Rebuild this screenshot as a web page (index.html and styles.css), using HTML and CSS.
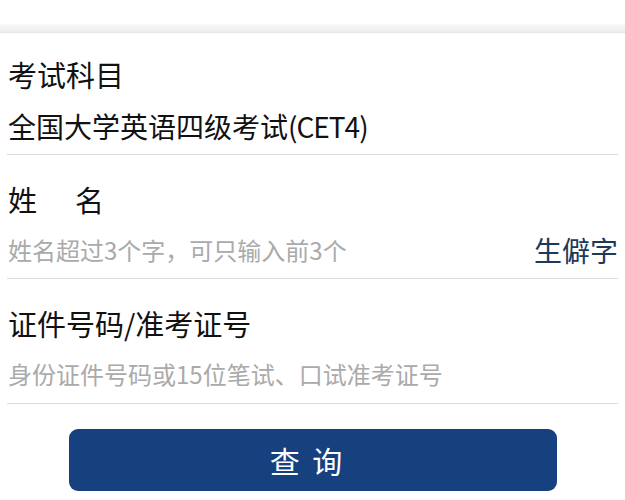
FILE: index.html
```html
<!DOCTYPE html>
<html lang="zh-CN">
<head>
<meta charset="utf-8">
<title>查询</title>
<link rel="stylesheet" href="styles.css">
</head>
<body>
<div class="topbar"></div>
<div class="shade"></div>
<form class="form">
  <div class="item first">
    <div class="label">考试科目</div>
    <div class="value">全国大学英语四级考试<span class="latin">(CET4)</span></div>
  </div>
  <div class="item">
    <div class="label">姓<span class="gap"></span>名</div>
    <div class="row">
      <span class="placeholder">姓名超过3个字，可只输入前3个</span>
      <span class="link">生僻字</span>
    </div>
  </div>
  <div class="item last">
    <div class="label">证件号码/准考证号</div>
    <div class="row">
      <span class="placeholder">身份证件号码或15位笔试、口试准考证号</span>
    </div>
  </div>
  <div class="actions">
    <button type="button" class="btn">查&nbsp;询</button>
  </div>
</form>
</body>
</html>
```
FILE: styles.css
```css
html, body {
  margin: 0;
  padding: 0;
  background: #fff;
}
body {
  font-family: "Noto Sans CJK SC", "Noto Sans", sans-serif;
  color: #111;
  width: 625px;
  height: 500px;
  overflow: hidden;
}
.topbar {
  height: 24px;
  background: #fff;
}
.shade {
  height: 9px;
  background: linear-gradient(#f8f8f8, #eeeeee 80%, #e4e4e4);
}
.form {
  margin: 0;
}
.item {
  margin: 0 7px;
  padding: 26px 0 10px 1px;
  border-bottom: 1px solid #dcdcdc;
}
.item.first {
  padding-top: 23px;
}
.item.last {
  padding-bottom: 11px;
}
.label {
  font-size: 29px;
  line-height: 36px;
  height: 36px;
}
.gap {
  display: inline-block;
  width: 38px;
}
.value {
  margin-top: 16px;
  font-size: 28px;
  line-height: 36px;
  height: 36px;
}
.latin {
  letter-spacing: -1px;
}
.row {
  margin-top: 15px;
  height: 36px;
  display: flex;
  align-items: center;
  justify-content: space-between;
}
.placeholder {
  font-size: 24px;
  color: #aaaaaa;
  line-height: 36px;
}
.link {
  font-size: 28px;
  color: #20385a;
  line-height: 36px;
}
.actions {
  display: flex;
  justify-content: center;
  padding-top: 25px;
}
.btn {
  width: 488px;
  height: 62px;
  border: none;
  border-radius: 9px;
  background: #17407f;
  color: #fff;
  font-family: "Noto Sans CJK SC", "Noto Sans", sans-serif;
  font-size: 30px;
  letter-spacing: 3px;
  padding: 0 10px 0 0;
}
```
